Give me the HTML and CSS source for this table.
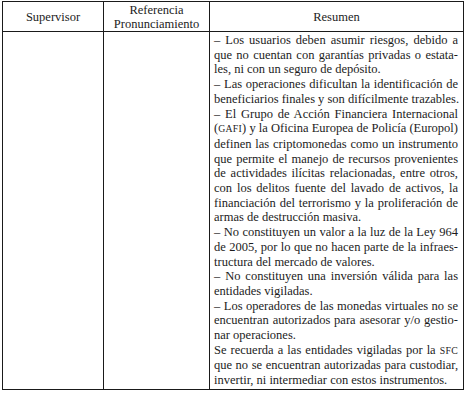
FILE: index.html
```html
<!DOCTYPE html>
<html lang="es">
<head>
<meta charset="utf-8">
<link rel="stylesheet" href="styles.css">
</head>
<body>
<table class="tbl">
  <colgroup>
    <col class="c1"><col class="c2"><col class="c3">
  </colgroup>
  <thead>
    <tr>
      <th>Supervisor</th>
      <th>Referencia<br>Pronunciamiento</th>
      <th>Resumen</th>
    </tr>
  </thead>
  <tbody>
    <tr>
      <td></td>
      <td></td>
      <td class="sum">
        <div class="p">
          <span class="l">– Los usuarios deben asumir riesgos, debido a</span>
          <span class="l">que no cuentan con garantías privadas o estata-</span>
          <span class="e">les, ni con un seguro de depósito.</span>
        </div>
        <div class="p">
          <span class="l">– Las operaciones dificultan la identificación de</span>
          <span class="e">beneficiarios finales y son difícilmente trazables.</span>
        </div>
        <div class="p">
          <span class="l">– El Grupo de Acción Financiera Internacional</span>
          <span class="l">(<span class="sc">GAFI</span>) y la Oficina Europea de Policía (Europol)</span>
          <span class="l">definen las criptomonedas como un instrumento</span>
          <span class="l">que permite el manejo de recursos provenientes</span>
          <span class="l">de actividades ilícitas relacionadas, entre otros,</span>
          <span class="l">con los delitos fuente del lavado de activos, la</span>
          <span class="l">financiación del terrorismo y la proliferación de</span>
          <span class="e">armas de destrucción masiva.</span>
        </div>
        <div class="p">
          <span class="l">– No constituyen un valor a la luz de la Ley 964</span>
          <span class="l">de 2005, por lo que no hacen parte de la infraes-</span>
          <span class="e">tructura del mercado de valores.</span>
        </div>
        <div class="p">
          <span class="l">– No constituyen una inversión válida para las</span>
          <span class="e">entidades vigiladas.</span>
        </div>
        <div class="p">
          <span class="l">– Los operadores de las monedas virtuales no se</span>
          <span class="l">encuentran autorizados para asesorar y/o gestio-</span>
          <span class="e">nar operaciones.</span>
        </div>
        <div class="p">
          <span class="l">Se recuerda a las entidades vigiladas por la <span class="sc">SFC</span></span>
          <span class="l">que no se encuentran autorizadas para custodiar,</span>
          <span class="e">invertir, ni intermediar con estos instrumentos.</span>
        </div>
      </td>
    </tr>
  </tbody>
</table>
</body>
</html>
```

FILE: styles.css
```css
html, body {
  margin: 0;
  padding: 0;
  background: #ffffff;
}

body {
  padding: 1px 0 0 2px;
  font-family: "Liberation Serif", "Times New Roman", serif;
  color: #1c1c1c;
}

.tbl {
  border-collapse: collapse;
  table-layout: fixed;
  width: 461px;
}

.c1 { width: 101px; }
.c2 { width: 106px; }
.c3 { width: 254px; }

.tbl th,
.tbl td {
  border: 1px solid #1a1a1a;
  vertical-align: top;
}

.tbl th {
  height: 29px;
  padding: 0;
  font-weight: normal;
  font-size: 12.5px;
  line-height: 14px;
  text-align: center;
  vertical-align: middle;
}

.tbl td {
  padding: 1px 5px 1px 4px;
}

.sum {
  font-size: 12.5px;
  line-height: 14.7px;
}

.p {
  display: block;
}

.l,
.e {
  display: block;
  white-space: nowrap;
}

.l {
  text-align: justify;
  text-align-last: justify;
}

.e {
  text-align: left;
}

.sc {
  font-size: 0.78em;
  letter-spacing: 0.03em;
}
```
